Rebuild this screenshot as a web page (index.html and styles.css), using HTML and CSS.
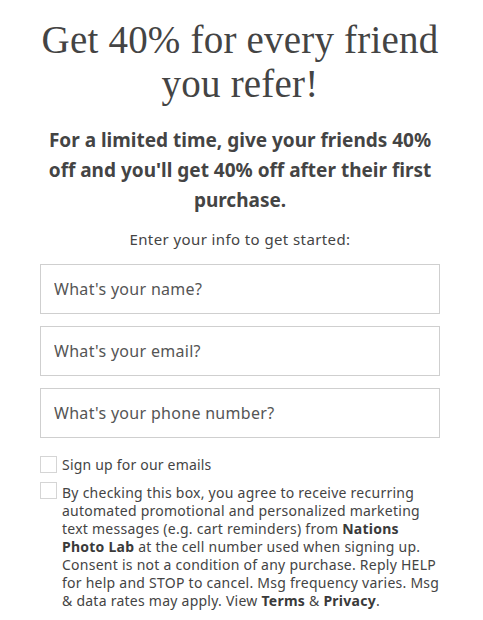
FILE: index.html
```html
<!DOCTYPE html>
<html lang="en">
<head>
<meta charset="utf-8">
<title>Refer a friend</title>
<link rel="stylesheet" href="styles.css">
</head>
<body>
<main class="referral">
  <h1 class="title">Get 40% for every friend you refer!</h1>
  <p class="subtitle">For a limited time, give your friends 40% off and you'll get 40% off after their first purchase.</p>
  <p class="prompt">Enter your info to get started:</p>
  <form class="form">
    <input class="field" type="text" placeholder="What's your name?">
    <input class="field" type="email" placeholder="What's your email?">
    <input class="field" type="tel" placeholder="What's your phone number?">
    <label class="check check-email">
      <span class="box"></span>
      <span class="check-text">Sign up for our emails</span>
    </label>
    <label class="check check-legal">
      <span class="box"></span>
      <span class="legal-text">By checking this box, you agree to receive recurring automated promotional and personalized marketing text messages (e.g. cart reminders) from <b>Nations Photo Lab</b> at the cell number used when signing up. Consent is not a condition of any purchase. Reply HELP for help and STOP to cancel. Msg frequency varies. Msg &amp; data rates may apply. View <b>Terms</b> &amp; <b>Privacy</b>.</span>
    </label>
  </form>
</main>
</body>
</html>
```

FILE: styles.css
```css
* { box-sizing: border-box; }
html, body { margin: 0; padding: 0; background: #fff; }
body {
  font-family: "Noto Sans", "Open Sans", sans-serif;
  color: #444;
}
.referral {
  width: 400px;
  margin: 0 0 0 40px;
  padding-top: 18px;
  display: flex;
  flex-direction: column;
  align-items: stretch;
}
.title {
  margin: 0;
  font-family: "Liberation Serif", "DejaVu Serif", serif;
  font-weight: 400;
  font-size: 39px;
  line-height: 44px;
  text-align: center;
  color: #444;
  letter-spacing: 0.2px;
}
.subtitle {
  margin: 19px 0 0;
  font-size: 19px;
  font-weight: 700;
  line-height: 30px;
  text-align: center;
  color: #444;
  padding: 0 4px;
}
.prompt {
  margin: 14px 0 0;
  font-size: 15px;
  line-height: 20px;
  text-align: center;
  letter-spacing: 0.4px;
  color: #444;
}
.form {
  margin-top: 15px;
  display: flex;
  flex-direction: column;
  gap: 12px;
}
.field {
  display: block;
  width: 100%;
  height: 50px;
  border: 1px solid #cfcfcf;
  border-radius: 0;
  padding: 0 13px;
  font-family: inherit;
  font-size: 16px;
  letter-spacing: 0.3px;
  color: #444;
  background: #fff;
  outline: none;
}
.field::placeholder { color: #555; opacity: 1; }
.check {
  display: flex;
  align-items: flex-start;
  gap: 5px;
  font-size: 14px;
  line-height: 18px;
  color: #444;
}
.check-email { margin-top: 6px; }
.check-legal { margin-top: -4px; }
.box {
  flex: 0 0 auto;
  width: 17px;
  height: 17px;
  border: 1px solid #d5d5d5;
  background: #fff;
}
.check-text { letter-spacing: 0.2px; }
.legal-text {
  margin-top: 2px;
  font-size: 14px;
  line-height: 18px;
  letter-spacing: 0.25px;
}
.legal-text b { font-weight: 700; color: #3a3a3a; }
```
